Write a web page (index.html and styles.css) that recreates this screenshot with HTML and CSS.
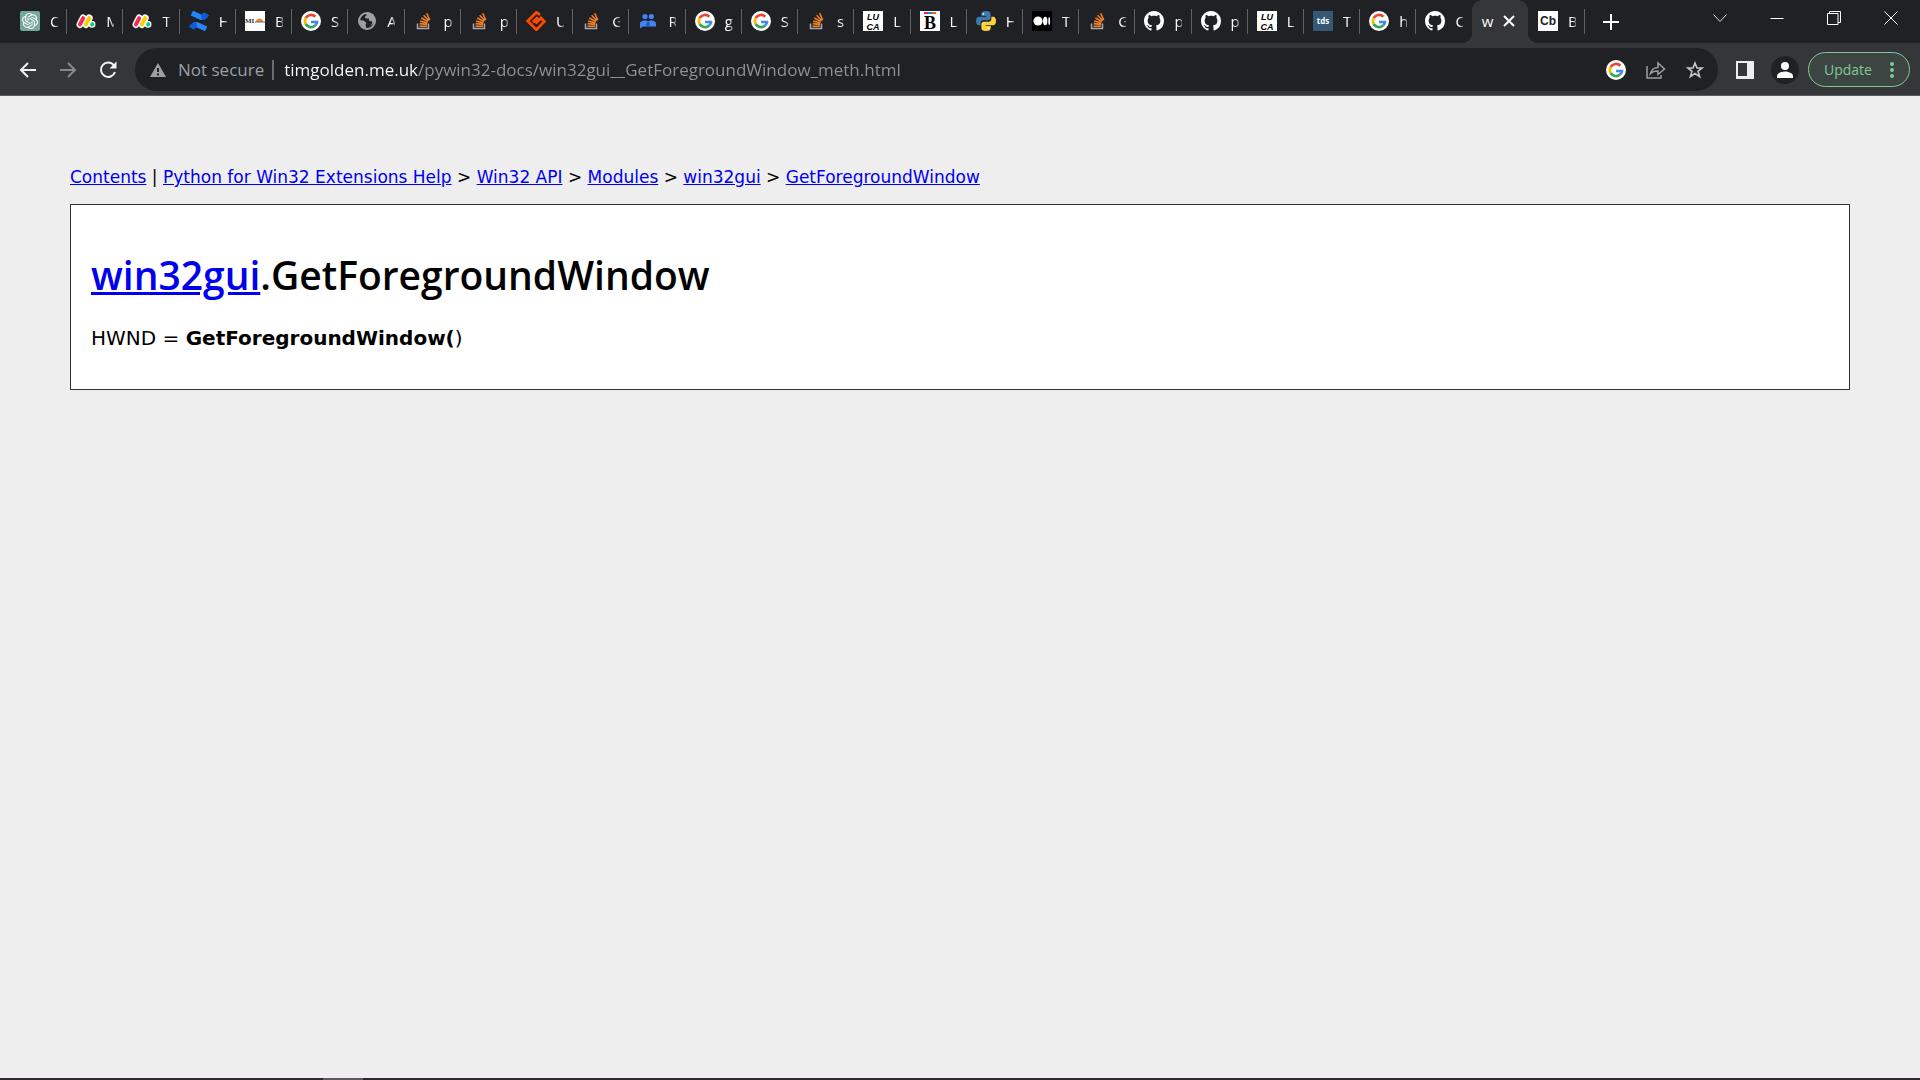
FILE: index.html
```html
<!DOCTYPE html>
<html lang="en">
<head>
<meta charset="utf-8">
<title>win32gui.GetForegroundWindow</title>
<link rel="stylesheet" href="styles.css">
</head>
<body>
<svg class="sprite" aria-hidden="true">
  <symbol id="gpt" viewBox="0 0 20 20"><rect width="20" height="20" rx="2" fill="#74a899"/><path transform="translate(2 2) scale(.667)" fill="#fff" d="M22.280 9.820a5.980 5.980 0 0 0-.52-4.910 6.050 6.050 0 0 0-6.510-2.900A6.070 6.070 0 0 0 4.980 4.180a5.980 5.980 0 0 0-4 2.900 6.050 6.050 0 0 0 .74 7.100 5.980 5.980 0 0 0 .51 4.910 6.050 6.050 0 0 0 6.510 2.900A5.980 5.980 0 0 0 13.260 24a6.060 6.060 0 0 0 5.770-4.210 5.990 5.990 0 0 0 4-2.900 6.060 6.060 0 0 0-.75-7.070zm-9.020 12.610a4.480 4.480 0 0 1-2.880-1.040l.14-.08 4.780-2.760a.8.8 0 0 0 .39-.68v-6.740l2.020 1.170v5.630a4.500 4.500 0 0 1-4.450 4.500zM3.600 18.300a4.470 4.470 0 0 1-.54-3.010l.14.080 4.780 2.760a.77.77 0 0 0 .78 0l5.840-3.370v2.330l-4.860 2.840A4.500 4.500 0 0 1 3.600 18.300zM2.340 7.900a4.490 4.490 0 0 1 2.370-1.980v5.680a.77.77 0 0 0 .39.68l5.810 3.350-2.020 1.170-4.870-2.760A4.500 4.500 0 0 1 2.340 7.900zm16.600 3.850-5.840-3.390 2.020-1.160 4.830 2.790a4.490 4.490 0 0 1-.68 8.100v-5.670a.79.79 0 0 0-.33-.67zm2.010-3.020-.14-.09-4.770-2.780a.78.78 0 0 0-.79 0L9.410 9.230V6.900l4.860-2.790a4.500 4.500 0 0 1 6.680 4.620zM8.310 12.860l-2.020-1.160V6.070a4.500 4.500 0 0 1 7.380-3.450l-.14.080-4.780 2.760a.8.8 0 0 0-.39.68zm1.100-2.360 2.600-1.500 2.600 1.500v3l-2.600 1.500-2.600-1.500z"/></symbol>
  <symbol id="monday" viewBox="0 0 20 20"><g stroke="#fff" stroke-width="7" stroke-linecap="round" fill="none"><path d="M4 13.5 7.2 7M10 13.5 13.2 7M16 13.2v.1"/></g><g stroke-width="4" stroke-linecap="round" fill="none"><path d="M4 13.4 7.2 7.2" stroke="#f62b54"/><path d="M10 13.4 13.2 7.2" stroke="#fc0"/><path d="M16.2 13.3v.1" stroke="#00ca72"/></g></symbol>
  <symbol id="confluence" viewBox="0 0 20 20"><g id="wave"><path d="M.3 15.800C3.500 10.300 6.500 10 11 12.200l7.300 3.400-2.300 4.700-6.500-3c-2-1-3.300-.8-4.500 1.300z" fill="#2684ff"/><path d="M.3 15.800C2.300 12.300 4.500 11 6.800 11L8.500 16.900c-1.500-.3-2.500.2-3.500 1.700z" fill="#0f5ad8"/></g><use href="#wave" transform="rotate(180 10 10)"/></symbol>
  <symbol id="mi" viewBox="0 0 20 20"><path fill="#fff" d="M0 0h20v20H0z"/><path d="M11 11a3.500 3.500 0 0 1 7 0z" fill="#e88b3a"/><path d="M10 11h10" stroke="#666"/><text x="0" y="11.500" font-family="Liberation Serif, serif" font-size="7" font-weight="700" fill="#333">MI</text></symbol>
  <symbol id="google" viewBox="0 0 20 20"><circle cx="10" cy="10" r="10" fill="#fff"/><g fill="none" stroke-width="2.700"><path d="M14.300 5.700A6.100 6.100 0 0 0 4.700 7" stroke="#ea4335"/><path d="M4.700 7a6.100 6.100 0 0 0 0 6" stroke="#fbbc05"/><path d="M4.700 13a6.100 6.100 0 0 0 9.300 1.600" stroke="#34a853"/><path d="M14 14.600c1.500-1.300 2-2.800 2-3.600h-6" stroke="#4285f4"/></g></symbol>
  <symbol id="globe" viewBox="0 0 20 20"><circle cx="10" cy="10" r="8" fill="#202124" stroke="#9aa0a6" stroke-width="2"/><path d="M9.500 1.500c-1 1.500 1 2.500-.5 3.500-2 .5-1 2.500 1 2.500h2v2c1 1 3 0 3.500 2l-2 3.500 4-3 1-3-2-5.500-4-2zM1.500 9l5 .5 3 2.500-1 2 1 4-4-2-3.500-4z" fill="#9aa0a6"/></symbol>
  <symbol id="stack" viewBox="0 0 20 20"><path d="M3.500 12.500v5h11v-5" fill="none" stroke="#a7abae" stroke-width="1.500"/><g stroke="#f48024" stroke-width="1.600"><path d="M5.500 15.200h7.500M5.700 12.600l7.400.8M6.200 9.900l7.200 2M7.400 7l6.500 3.600M9.600 4.300l5.200 5.400M12.700 2.300l3 6.800"/></g></symbol>
  <symbol id="hostinger" viewBox="0 0 20 20"><path d="m14 3.800-3.600-2.500L1.800 10l8.600 8.700 8-8.200-3.400-3.500-5.500 5.500M6.800 11.200l5-5" fill="none" stroke="#ff4a00" stroke-width="2.800"/></symbol>
  <symbol id="people" viewBox="0 0 20 20"><circle cx="7" cy="5.500" r="2.600" fill="#4285f4"/><circle cx="13.300" cy="5.500" r="2.600" fill="#4285f4"/><path d="M2 17.500V13c0-3 3-3.500 5-3.500 1.300 0 2.500.3 3.200.8.900-.5 2-.8 3.100-.8 2 0 4.700.7 4.700 3.500v2.500H5z" fill="#4285f4"/><path d="M10.200 10.300c1.600 1.200 1.800 2.700 1.800 5.200H8c0-2.700.4-4 2.200-5.200z" fill="#1a5bcc"/></symbol>
  <symbol id="luca" viewBox="0 0 20 20"><path fill="#fff" d="M0 0h20v20H0z"/><g font-family="Liberation Sans, sans-serif" font-size="9" font-weight="700" font-style="italic" fill="#000" text-anchor="middle"><text x="10" y="9">LU</text><text x="10" y="19">CA</text></g></symbol>
  <symbol id="bee" viewBox="0 0 20 20"><path fill="#fff" d="M0 0h20v20H0z"/><path d="M4 2h4" stroke="#e0218a" stroke-width="2"/><path d="M8 2h4" stroke="#2a7ad2" stroke-width="2"/><path d="M12 2h4" stroke="#e65a4b" stroke-width="2"/><text x="10" y="18" text-anchor="middle" font-family="Liberation Serif, serif" font-size="18" font-weight="700" fill="#000">B</text></symbol>
  <symbol id="python" viewBox="0 0 20 20"><path d="M10 0C6.500 0 5.300 1 5.300 3v2h5v.8H3C1 5.800 0 7.500 0 10s1 4.300 2.800 4.300h1.800V12c0-1.500 1.200-2.700 2.700-2.700h5c1.300 0 2.300-1 2.300-2.300V3c0-2-1.500-3-4.600-3z" fill="#3b78ab"/><path d="M10 20c3.500 0 4.700-1 4.700-3v-2h-5v-.8H17c2 0 3-1.700 3-4.200s-1-4.300-2.800-4.300h-1.800V8c0 1.500-1.200 2.700-2.700 2.700h-5c-1.300 0-2.300 1-2.300 2.300v4c0 2 1.500 3 4.600 3z" fill="#ffd43b"/><circle cx="7.400" cy="2.800" r=".9" fill="#fff"/><circle cx="12.600" cy="17.200" r=".9" fill="#fff"/></symbol>
  <symbol id="medium" viewBox="0 0 20 20"><rect width="20" height="20" rx="1" fill="#000"/><g fill="#fff"><circle cx="6" cy="10" r="4.600"/><ellipse cx="13.200" cy="10" rx="2.200" ry="4.300"/><ellipse cx="17.200" cy="10" rx=".9" ry="3.900"/></g></symbol>
  <symbol id="github" viewBox="0 0 16 16"><path fill="#fff" d="M8 0C3.580 0 0 3.580 0 8c0 3.540 2.290 6.530 5.470 7.590.4.070.55-.17.55-.38 0-.19-.01-.82-.01-1.490-2.010.37-2.530-.49-2.690-.94-.09-.23-.48-.94-.82-1.130-.28-.15-.68-.52-.01-.53.63-.01 1.080.58 1.230.82.72 1.210 1.870.87 2.330.66.07-.52.28-.87.51-1.070-1.780-.2-3.640-.89-3.640-3.950 0-.87.31-1.590.82-2.150-.08-.2-.36-1.020.08-2.120 0 0 .67-.21 2.200.82.64-.18 1.320-.27 2-.27s1.360.09 2 .27c1.530-1.040 2.200-.82 2.200-.82.44 1.100.16 1.920.08 2.120.51.56.82 1.270.82 2.150 0 3.070-1.870 3.750-3.650 3.950.29.25.54.73.54 1.480 0 1.070-.01 1.930-.01 2.200 0 .21.15.46.55.38A8.010 8.010 0 0 0 16 8c0-4.420-3.580-8-8-8z"/></symbol>
  <symbol id="tds" viewBox="0 0 20 20"><path fill="#355876" d="M0 0h20v20H0z"/><text x="10" y="13" text-anchor="middle" font-family="Open Sans, sans-serif" font-size="8" font-weight="700" fill="#fff">tds</text></symbol>
  <symbol id="cb" viewBox="0 0 20 20"><path fill="#fff" d="M0 0h20v20H0z"/><text x="10" y="14" text-anchor="middle" font-family="Liberation Sans, sans-serif" font-size="12" font-weight="700" fill="#222">Cb</text></symbol>
</svg>

<header class="browser">
  <div class="titlebar">
    <nav class="tabs" aria-label="Tabs">
      <button class="tab"><svg class="icon"><use href="#gpt"/></svg><span class="name">C</span></button>
      <button class="tab"><svg class="icon"><use href="#monday"/></svg><span class="name">M</span></button>
      <button class="tab"><svg class="icon"><use href="#monday"/></svg><span class="name">T</span></button>
      <button class="tab"><svg class="icon"><use href="#confluence"/></svg><span class="name">H</span></button>
      <button class="tab"><svg class="icon"><use href="#mi"/></svg><span class="name">B</span></button>
      <button class="tab"><svg class="icon"><use href="#google"/></svg><span class="name">S</span></button>
      <button class="tab"><svg class="icon"><use href="#globe"/></svg><span class="name">A</span></button>
      <button class="tab"><svg class="icon"><use href="#stack"/></svg><span class="name">p</span></button>
      <button class="tab"><svg class="icon"><use href="#stack"/></svg><span class="name">p</span></button>
      <button class="tab"><svg class="icon"><use href="#hostinger"/></svg><span class="name">U</span></button>
      <button class="tab"><svg class="icon"><use href="#stack"/></svg><span class="name">G</span></button>
      <button class="tab"><svg class="icon"><use href="#people"/></svg><span class="name">R</span></button>
      <button class="tab"><svg class="icon"><use href="#google"/></svg><span class="name">g</span></button>
      <button class="tab"><svg class="icon"><use href="#google"/></svg><span class="name">S</span></button>
      <button class="tab"><svg class="icon"><use href="#stack"/></svg><span class="name">s</span></button>
      <button class="tab"><svg class="icon"><use href="#luca"/></svg><span class="name">L</span></button>
      <button class="tab"><svg class="icon"><use href="#bee"/></svg><span class="name">L</span></button>
      <button class="tab"><svg class="icon"><use href="#python"/></svg><span class="name">H</span></button>
      <button class="tab"><svg class="icon"><use href="#medium"/></svg><span class="name">T</span></button>
      <button class="tab"><svg class="icon"><use href="#stack"/></svg><span class="name">G</span></button>
      <button class="tab"><svg class="icon"><use href="#github"/></svg><span class="name">p</span></button>
      <button class="tab"><svg class="icon"><use href="#github"/></svg><span class="name">p</span></button>
      <button class="tab"><svg class="icon"><use href="#luca"/></svg><span class="name">L</span></button>
      <button class="tab"><svg class="icon"><use href="#tds"/></svg><span class="name">T</span></button>
      <button class="tab"><svg class="icon"><use href="#google"/></svg><span class="name">h</span></button>
      <button class="tab before-active"><svg class="icon"><use href="#github"/></svg><span class="name">C</span></button>
      <div class="tab active">
        <button class="current">w</button>
        <button class="close-tab" aria-label="Close tab"><svg width="12" height="12" viewBox="0 0 12 12"><path d="m1 1 10 10M11 1 1 11" stroke="#fff" stroke-width="2"/></svg></button>
      </div>
      <button class="tab"><svg class="icon"><use href="#cb"/></svg><span class="name">B</span></button>
    </nav>
    <div class="window-tools">
      <button class="new-tab" aria-label="New tab"><svg width="16" height="16" viewBox="0 0 16 16"><path d="M8 0v16M0 8h16" stroke="#fff" stroke-width="2"/></svg></button>
      <div class="window-buttons">
        <button aria-label="Search tabs"><svg width="14" height="14" viewBox="0 0 14 14"><path d="m.5 3.500 6.500 7 6.500-7" fill="none" stroke="#ddd"/></svg></button>
        <button aria-label="Minimize"><svg width="14" height="14" viewBox="0 0 14 14"><path d="M.5 7.500h13" stroke="#fff"/></svg></button>
        <button aria-label="Restore"><svg width="14" height="14" viewBox="0 0 14 14"><path d="M.5 2.500h10.500v11H.5zM2.500 2.500v-2h11v11H11" fill="none" stroke="#fff"/></svg></button>
        <button aria-label="Close"><svg width="14" height="14" viewBox="0 0 14 14"><path d="m.5.5 13 13M13.500.5l-13 13" stroke="#fff"/></svg></button>
      </div>
    </div>
  </div>

  <div class="toolbar">
    <div class="nav-buttons">
      <button aria-label="Back"><svg width="18" height="16" viewBox="0 0 18 16"><path d="M17 8H2M9 1 2 8l7 7" fill="none" stroke="#f1f3f4" stroke-width="2"/></svg></button>
      <button aria-label="Forward"><svg width="18" height="16" viewBox="0 0 18 16"><path d="M1 8h15M9 1l7 7-7 7" fill="none" stroke="#86888c" stroke-width="2"/></svg></button>
      <button aria-label="Reload"><svg width="18" height="18" viewBox="0 0 18 18"><path d="M15 4.500A7.200 7.200 0 1 0 16 11" fill="none" stroke="#f1f3f4" stroke-width="2"/><path d="M17.500.5v7h-7z" fill="#f1f3f4"/></svg></button>
    </div>
    <div class="omnibox">
      <svg width="16" height="14" viewBox="0 0 16 14"><path d="M8 0 0 14h16z" fill="#9aa0a6"/><path d="M8 5v4M8 10.500v2" stroke="#202124" stroke-width="2"/></svg>
      <label class="security" for="address">Not secure</label>
      <input class="address" id="address" type="text" value="timgolden.me.uk/pywin32-docs/win32gui__GetForegroundWindow_meth.html">
      <div class="page-actions">
        <button aria-label="Search with Google"><svg class="icon"><use href="#google"/></svg></button>
        <button aria-label="Share"><svg width="20" height="18" viewBox="0 0 20 18"><path d="M1 5v12h14v-3M4.500 12.500c1-4 3.500-6 7.500-6V2l6.500 6-6.500 5.500V10c-3.500 0-5.500.5-7.500 2.500z" fill="none" stroke="#9d9fa2" stroke-width="1.500"/></svg></button>
        <button aria-label="Bookmark this page"><svg width="18" height="18" viewBox="0 0 18 18"><path d="m9 2 2 5h5.200L12 10.300l1.600 5.300L9 12.500l-4.600 3.100L6 10.300 1.800 7H7z" fill="none" stroke="#c4c6c8" stroke-width="1.600"/></svg></button>
      </div>
    </div>
    <button class="side-panel" aria-label="Side panel"><svg width="18" height="18" viewBox="0 0 18 18"><path fill="#eceef0" fill-rule="evenodd" d="M0 0h18v18H0zM2 2v13h9V2z"/></svg></button>
    <button class="profile" aria-label="Profile"><svg width="16" height="16" viewBox="0 0 16 16"><circle cx="8" cy="4" r="4" fill="#fff"/><path d="M0 16v-2c0-3 5-4.500 8-4.500s8 1.500 8 4.500v2z" fill="#fff"/></svg></button>
    <button class="update">Update<svg width="4" height="18" viewBox="0 0 4 18"><g fill="#81c995"><circle cx="2" cy="3" r="2"/><circle cx="2" cy="9" r="2"/><circle cx="2" cy="15" r="2"/></g></svg></button>
  </div>
</header>

<main class="page">
  <nav class="crumbs" aria-label="Breadcrumb"><a href="#">Contents</a> | <a href="#">Python for Win32 Extensions Help</a> &gt; <a href="#">Win32 API</a> &gt; <a href="#">Modules</a> &gt; <a href="#">win32gui</a> &gt; <a href="#">GetForegroundWindow</a></nav>
  <article class="doc">
    <h1><a href="#">win32gui</a>.GetForegroundWindow</h1>
    <p>HWND = <b>GetForegroundWindow(</b>)</p>
  </article>
</main>

<footer class="taskbar"><div class="running"></div></footer>
</body>
</html>
```
FILE: styles.css
```css
* { box-sizing: border-box; }

body {
  margin: 0;
  min-height: 100vh;
  display: flex;
  flex-direction: column;
  background: #eee;
  color: #000;
}

button {
  margin: 0;
  padding: 0;
  border: 0;
  background: none;
  color: inherit;
  font: inherit;
}

svg { display: block; flex: none; }
.sprite { display: none; }
.icon { width: 20px; height: 20px; }

/* Browser window frame */
.browser {
  font-family: "Open Sans", sans-serif;
  color: #fff;
  background: #35363a;
  border-bottom: 1px solid #5a5b5e;
}

.titlebar {
  display: flex;
  height: 43px;
  background: #202124;
}

.tabs {
  flex: 1;
  min-width: 0;
  display: flex;
  padding-left: 10px;
}

.tab {
  position: relative;
  flex: 1 1 0;
  min-width: 0;
  display: flex;
  align-items: center;
  gap: 10px;
  padding: 0 0 1px 10px;
  font-size: 15px;
  line-height: 20px;
}

.tab::after {
  content: "";
  position: absolute;
  right: -1px;
  top: 9px;
  width: 1px;
  height: 25px;
  background: #5f6165;
}

.name {
  width: 8px;
  overflow: hidden;
  text-align: left;
  -webkit-mask-image: linear-gradient(to right, #000 50%, rgba(0, 0, 0, .4));
  mask-image: linear-gradient(to right, #000 50%, rgba(0, 0, 0, .4));
}

.before-active::after { display: none; }

.active {
  background: #35363a;
  border-radius: 10px 10px 0 0;
}

.active::before,
.active::after {
  content: "";
  position: absolute;
  top: auto;
  bottom: 0;
  width: 10px;
  height: 10px;
}

.active::before {
  left: -10px;
  background: radial-gradient(circle at 0 0, #202124 10px, #35363a 10px);
}

.active::after {
  right: -10px;
  background: radial-gradient(circle at 100% 0, #202124 10px, #35363a 10px);
}

.window-tools {
  flex: none;
  width: 336px;
  display: flex;
  justify-content: space-between;
  padding-right: 1px;
}

.new-tab { padding: 0 19px; }

.window-buttons {
  display: flex;
  height: 36px;
}

.window-buttons button {
  width: 57px;
  display: grid;
  place-items: center;
}

/* Toolbar */
.toolbar {
  display: flex;
  align-items: center;
  height: 52px;
  padding: 1px 10px 0 19px;
}

.nav-buttons {
  display: flex;
  align-items: center;
  gap: 22px;
  margin-right: 18px;
}

.omnibox {
  flex: 1;
  min-width: 0;
  display: flex;
  align-items: center;
  height: 43px;
  padding: 0 14px 0 15px;
  border-radius: 22px;
  background: #202124;
  font-size: 17px;
  line-height: 24px;
}

.security {
  margin: 0 10px 0 12px;
  padding-right: 8px;
  border-right: 2px solid #6b6d71;
  color: #9aa0a6;
  line-height: 20px;
}

.address {
  flex: 1;
  min-width: 0;
  padding: 0;
  border: 0;
  outline: 0;
  font: inherit;
  color: transparent;
  background: linear-gradient(to right, #fff 134px, #8f9397 134px);
  -webkit-background-clip: text;
  background-clip: text;
}

.page-actions {
  display: flex;
  align-items: center;
  gap: 20px;
}

.side-panel { margin-left: 18px; }

.profile {
  width: 28px;
  height: 28px;
  margin: 0 9px 0 17px;
  border-radius: 50%;
  background: #202124;
  display: grid;
  place-items: center;
}

.update {
  display: flex;
  align-items: center;
  justify-content: space-between;
  width: 102px;
  height: 35px;
  padding: 0 15px;
  border: 1px solid #81c995;
  border-radius: 18px;
  background: #3d4543;
  color: #81c995;
  font-size: 14px;
}

/* Documentation page */
.page {
  flex: 1;
  padding: 70px 70px 0;
  font-family: Verdana, "DejaVu Sans", sans-serif;
}

a { color: #00e; text-decoration: underline; }

.crumbs {
  font-size: 17px;
  line-height: 22px;
}

.doc {
  margin-top: 16px;
  padding: 40px 20px 38px;
  border: 1px solid #333;
  background: #fff;
}

.doc h1 {
  margin: 0 0 20px;
  font-family: "Trebuchet MS", "Open Sans", sans-serif;
  font-size: 39px;
  font-weight: 600;
  line-height: 60px;
}

.doc p {
  margin: 0;
  font-size: 20px;
  line-height: 26px;
}

/* Edge of the auto-hidden taskbar */
.taskbar {
  height: 2px;
  padding-left: 323px;
  background: #2c2a2c;
}

.running {
  width: 40px;
  height: 2px;
  background: #5c5a5c;
}
```
